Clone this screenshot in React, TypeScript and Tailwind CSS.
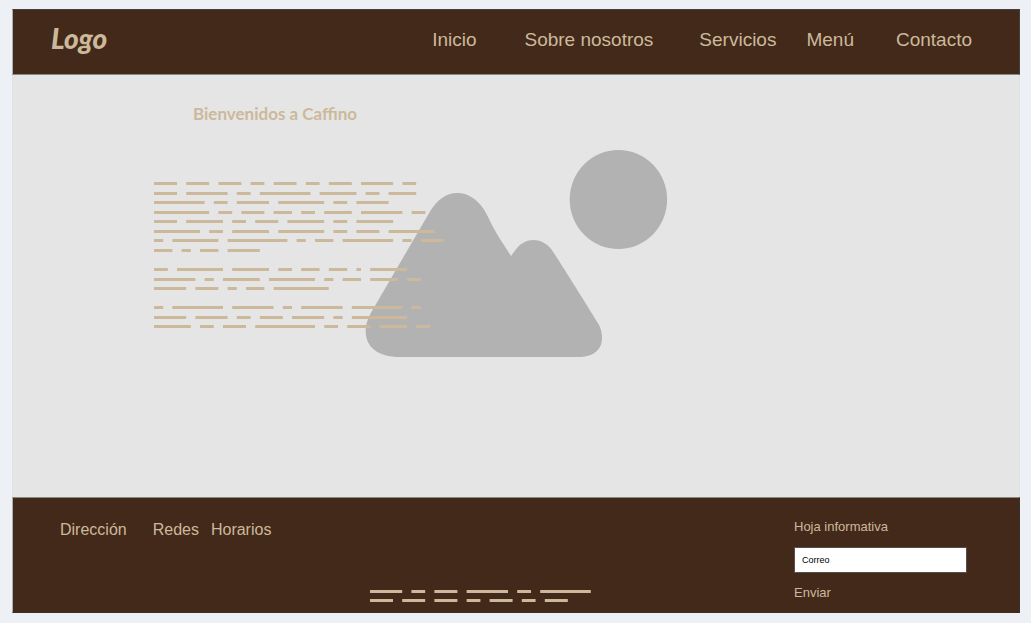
import React from "react";

const CHAR = 4.6;

const welcomeLines: number[][] = [
  [5, 5, 5, 3, 5, 3, 5, 7, 3],
  [5, 9, 3, 11, 8, 3, 6],
  [11, 3, 7, 10, 3, 7],
  [12, 3, 5, 4, 3, 6, 9, 3],
  [5, 8, 3, 5, 8, 3, 8],
  [10, 3, 8, 10, 3, 5, 10],
  [2, 10, 13, 2, 4, 11, 2, 5],
  [4, 2, 4, 7],
  [],
  [3, 10, 8, 3, 4, 4, 1, 8],
  [9, 2, 8, 10, 2, 4, 6, 3],
  [7, 5, 2, 4, 12],
  [],
  [2, 11, 9, 2, 9, 11, 2],
  [7, 7, 3, 5, 7, 2, 12],
  [8, 3, 5, 13, 3, 5, 6, 3],
];

const footerLines: number[][] = [
  [7, 3, 5, 9, 3, 11],
  [5, 5, 5, 3, 5, 3, 5],
];

interface GreekedTextProps {
  lines: number[][];
  width: number;
  leading: number;
}

/** Placeholder copy: every word is a bar as long as its letters. */
function GreekedText({ lines, width, leading }: GreekedTextProps) {
  const height = Math.round((lines.length - 1) * leading) + 3;
  return (
    <svg width={width} height={height} fill="#ccb99b" aria-hidden="true" className="block max-w-none">
      {lines.map((words, row) => {
        let cursor = 0;
        return words.map((length, i) => {
          const x = cursor * CHAR;
          cursor += length + 2;
          return <rect key={`${row}-${i}`} x={x} y={Math.round(row * leading)} width={length * CHAR} height={3} />;
        });
      })}
    </svg>
  );
}

function Landscape() {
  return (
    <svg width="303" height="208" viewBox="0 0 303 208" fill="#b2b2b2" aria-hidden="true">
      <path d="M35 207C13 207 0.7 197 0.7 181.5C0.7 174 3 168 6.7 161.5L65 61.5C72 50 81 43 92.3 43C103 43 112 49 119.3 60C124 68 127 76 131.7 83.5C136 91 141 98 146 106C147.5 104 149 101.5 151.7 98.5C156 93 162 90 168.3 90C175 90 181 93 185.7 98.5C189 102 233.3 173.5 233.3 173.5C236 178.500 237 183 237 188C237 200 228 207 213.3 207Z" />
      <ellipse cx="253.4" cy="49.5" rx="48.7" ry="49.4" />
    </svg>
  );
}

export default function App() {
  return (
    <div className="flex min-h-screen flex-col bg-[#edf1f6] pt-[9px] pr-[11px] pb-[10px] pl-3 font-['Liberation_Sans',Arial,sans-serif] text-[#ccb99b]">
      <header className="flex items-start justify-between border border-[#43403c] border-b-[#8b8782] border-l-[#a9b0b3] bg-[#43291a] pt-4 pr-[47px] pb-5 pl-[38px]">
        <a href="#" className="font-['Lato',sans-serif] text-[28px] leading-6 font-black italic">
          Logo
        </a>
        <nav className="flex text-[19px] leading-7">
          <a href="#inicio" className="mr-12">Inicio</a>
          <a href="#nosotros" className="mr-[46px]">Sobre nosotros</a>
          <a href="#servicios" className="mr-[30px]">Servicios</a>
          <a href="#menu" className="mr-[42px]">Menú</a>
          <a href="#contacto">Contacto</a>
        </nav>
      </header>

      <main className="relative flex-1 border-x border-[#dfe3e6] bg-[#e5e5e5] pt-[29px] pl-[141px]">
        <div className="absolute inset-x-0 top-[75px] flex justify-center">
          <Landscape />
        </div>
        <div className="relative">
          <h1 className="pl-[39px] font-['Lato',sans-serif] text-[17px] leading-5 font-bold">Bienvenidos a Caffino</h1>
          <div className="pt-[58px]">
            <GreekedText lines={welcomeLines} width={291} leading={9.55} />
          </div>
        </div>
      </main>

      <footer className="flex min-h-[116px] border border-[#3a302b] border-t-[#8b8782] border-l-[#a9b0b3] bg-[#43291a] pr-[52px] pl-[47px]">
        <nav className="flex pt-[22px] text-base leading-5">
          <a href="#direccion" className="mr-[26px]">Dirección</a>
          <a href="#redes" className="mr-3">Redes</a>
          <a href="#horarios">Horarios</a>
        </nav>
        <div className="ml-[99px] self-end pb-[10px]">
          <GreekedText lines={footerLines} width={221} leading={9} />
        </div>
        <form className="ml-auto flex w-[173px] flex-col items-start pt-[21px] text-[13px] leading-4" onSubmit={(e) => e.preventDefault()}>
          <label htmlFor="correo">Hoja informativa</label>
          <input
            id="correo"
            type="email"
            placeholder="Correo"
            className="mt-3 h-[26px] w-full border border-[#55504d] bg-white px-[7px] text-[9px] text-black placeholder:text-black"
          />
          <button type="submit" className="mt-3">Enviar</button>
        </form>
      </footer>
    </div>
  );
}
